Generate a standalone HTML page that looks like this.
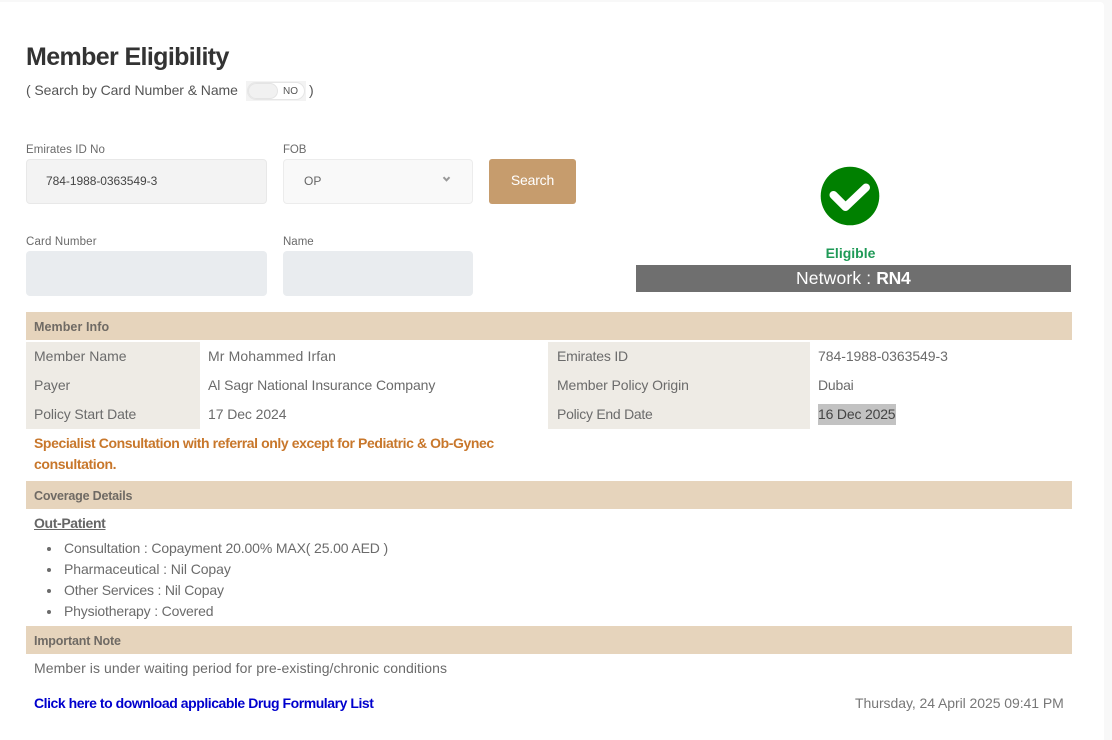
<!DOCTYPE html>
<html lang="en">
<head>
<meta charset="utf-8">
<title>Member Eligibility</title>
<style>
html,body{margin:0;padding:0;width:1112px;height:740px;overflow:hidden;background:#f8f8f8;font-family:"Liberation Sans",sans-serif;}
#card{position:absolute;left:0;top:2px;width:1104px;height:738px;background:#fff;border-top-right-radius:4px;}
.b{position:absolute;box-sizing:border-box;}
.t{position:absolute;white-space:nowrap;font-size:14px;line-height:20px;color:#6b6b6b;}
.h{font-weight:bold;font-size:12.5px;color:#6f6a64;}
.bar{position:absolute;left:26px;width:1046px;height:28px;background:#e6d4bc;}
.lab{position:absolute;background:#eeebe5;}
.fl{font-size:11.5px;color:#6a6a6a;}
.dot{position:absolute;left:47px;width:4px;height:4px;border-radius:50%;background:#6b6b6b;}
</style>
</head>
<body>
<div id="card"></div>

<div class="t" style="left:26px;top:42px;font-size:25px;line-height:30px;font-weight:bold;color:#333;letter-spacing:-.62px;">Member Eligibility</div>
<div class="t" style="left:26px;top:80px;color:#555;letter-spacing:-.07px;">( Search by Card Number &amp; Name</div>
<div class="b" style="left:246px;top:81px;width:60px;height:20px;background:#f3f3f3;"></div>
<div class="b" style="left:247px;top:82px;width:58px;height:18px;background:#fff;border:1px solid #e6e6e6;border-radius:9px;"></div>
<div class="b" style="left:248px;top:83px;width:30px;height:16px;background:#f1f1f1;border:1px solid #e4e4e4;border-radius:8px;"></div>
<div class="t" style="left:283px;top:82px;font-size:10px;color:#555;">NO</div>
<div class="t" style="left:309px;top:80px;color:#555;">)</div>

<div class="t fl" style="left:26px;top:139px;top:140px;letter-spacing:.07px;">Emirates ID No</div>
<div class="b" style="left:26px;top:159px;width:241px;height:45px;background:#f3f3f3;border:1px solid #e8e8e8;border-radius:4px;"></div>
<div class="t" style="left:46px;top:171px;font-size:12px;color:#444;letter-spacing:-.05px;">784-1988-0363549-3</div>
<div class="t fl" style="left:283px;top:140px;letter-spacing:-.1px;">FOB</div>
<div class="b" style="left:283px;top:159px;width:190px;height:45px;background:#f9f9f9;border:1px solid #ececec;border-radius:4px;"></div>
<div class="t" style="left:304px;top:171px;font-size:12px;color:#666;">OP</div>
<svg style="position:absolute;left:442px;top:176px" width="9" height="6" viewBox="0 0 9 6"><path d="M1.5 1.2 L4.5 4.3 L7.5 1.2" fill="none" stroke="#999" stroke-width="2"/></svg>
<div class="b" style="left:489px;top:159px;width:87px;height:45px;background:#c69c6d;border-radius:3px;"></div>
<div class="t" style="left:489px;top:170px;width:87px;text-align:center;color:#fff;letter-spacing:-.2px;">Search</div>

<div class="t fl" style="left:26px;top:232px;letter-spacing:.15px;">Card Number</div>
<div class="b" style="left:26px;top:251px;width:241px;height:45px;background:#e9ecef;border-radius:4px;"></div>
<div class="t fl" style="left:283px;top:232px;">Name</div>
<div class="b" style="left:283px;top:251px;width:190px;height:45px;background:#e9ecef;border-radius:4px;"></div>

<svg style="position:absolute;left:820px;top:166px" width="60" height="60" viewBox="0 0 60 60"><circle cx="30" cy="30" r="29.3" fill="#008000"/><path d="M13.5 29 L25.5 41 L46 21.5" fill="none" stroke="#fff" stroke-width="8" stroke-linecap="round" stroke-linejoin="round"/></svg>
<div class="t" style="left:636px;top:243px;width:429px;text-align:center;font-weight:bold;color:#1f9a57;">Eligible</div>
<div class="b" style="left:636px;top:265px;width:435px;height:27px;background:#6f6f6f;"></div>
<div class="t" style="left:796px;top:267.5px;font-size:17.5px;color:#fff;letter-spacing:.15px;">Network : <b style="letter-spacing:-.3px;">RN4</b></div>

<div class="bar" style="top:312px;"></div>
<div class="t h" style="left:34px;top:317px;letter-spacing:.08px;">Member Info</div>
<div class="lab" style="left:26px;top:342px;width:174px;height:87px;"></div>
<div class="lab" style="left:548px;top:342px;width:262px;height:87px;"></div>
<div class="t" style="left:34px;top:346px;">Member Name</div>
<div class="t" style="left:208px;top:346px;letter-spacing:.12px;">Mr Mohammed Irfan</div>
<div class="t" style="left:557px;top:346px;letter-spacing:-.2px;">Emirates ID</div>
<div class="t" style="left:818px;top:346px;letter-spacing:-.05px;">784-1988-0363549-3</div>
<div class="t" style="left:34px;top:375px;letter-spacing:-.1px;">Payer</div>
<div class="t" style="left:208px;top:375px;letter-spacing:-.09px;">Al Sagr National Insurance Company</div>
<div class="t" style="left:557px;top:375px;letter-spacing:-.1px;">Member Policy Origin</div>
<div class="t" style="left:818px;top:375px;letter-spacing:-.2px;">Dubai</div>
<div class="t" style="left:34px;top:404px;letter-spacing:-.12px;">Policy Start Date</div>
<div class="t" style="left:208px;top:404px;letter-spacing:-.09px;">17 Dec 2024</div>
<div class="t" style="left:557px;top:404px;letter-spacing:-.27px;">Policy End Date</div>
<div class="b" style="left:818px;top:404px;width:78px;height:21px;background:#c2c2c2;"></div>
<div class="t" style="left:818px;top:404px;color:#444;letter-spacing:-.18px;">16 Dec 2025</div>

<div class="t" style="left:34px;top:433px;font-weight:bold;color:#c8772b;letter-spacing:-.41px;">Specialist Consultation with referral only except for Pediatric &amp; Ob-Gynec</div>
<div class="t" style="left:34px;top:454px;font-weight:bold;color:#c8772b;letter-spacing:-.38px;">consultation.</div>

<div class="bar" style="top:481px;"></div>
<div class="t h" style="left:34px;top:486px;letter-spacing:-.2px;">Coverage Details</div>
<div class="t" style="left:34px;top:513px;font-weight:bold;text-decoration:underline;color:#666;letter-spacing:-.36px;">Out-Patient</div>
<div class="dot" style="top:547px;"></div>
<div class="t" style="left:64px;top:538px;letter-spacing:-.14px;">Consultation : Copayment 20.00% MAX( 25.00 AED )</div>
<div class="dot" style="top:568px;"></div>
<div class="t" style="left:64px;top:559px;letter-spacing:-.08px;">Pharmaceutical : Nil Copay</div>
<div class="dot" style="top:589px;"></div>
<div class="t" style="left:64px;top:580px;letter-spacing:-.2px;">Other Services : Nil Copay</div>
<div class="dot" style="top:610px;"></div>
<div class="t" style="left:64px;top:601px;letter-spacing:-.17px;">Physiotherapy : Covered</div>

<div class="bar" style="top:626px;"></div>
<div class="t h" style="left:34px;top:631px;letter-spacing:-.15px;">Important Note</div>
<div class="t" style="left:34px;top:658px;letter-spacing:.08px;">Member is under waiting period for pre-existing/chronic conditions</div>
<div class="t" style="left:34px;top:693px;font-weight:bold;color:#0000cd;letter-spacing:-.45px;">Click here to download applicable Drug Formulary List</div>
<div class="t" style="left:855px;top:693px;color:#777;letter-spacing:-.06px;">Thursday, 24 April 2025 09:41 PM</div>
</body>
</html>
